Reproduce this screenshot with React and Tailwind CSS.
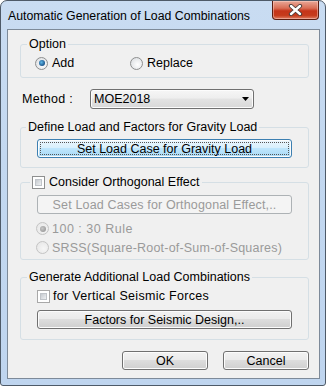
import React from "react";

const BTN =
  "h-[19px] flex items-center justify-center rounded-[3px] border leading-[14px]";
const BTN_NORMAL =
  "border-[#707070] text-black bg-[linear-gradient(#f2f2f2_0%,#ebebeb_45%,#dddddd_50%,#cfcfcf_100%)] shadow-[inset_0_0_0_1px_#fcfcfc]";
const BTN_FOCUS =
  "border-[#3c7fb1] text-black bg-[linear-gradient(#eaf6fd_0%,#d9f0fc_45%,#bee6fd_50%,#a7d9f5_100%)] shadow-[inset_0_0_0_1px_#fcfcfc]";
const BTN_DISABLED = "border-[#adb2b5] text-[#9a9a9a] bg-[#f4f4f4]";

function Radio({ checked, disabled }) {
  return (
    <span
      className={
        "w-[13px] h-[13px] rounded-full border flex items-center justify-center shrink-0 " +
        (disabled
          ? "border-[#c4c4c4] bg-[radial-gradient(circle_at_60%_60%,#f6f6f6_0%,#e4e4e4_100%)]"
          : "border-[#8e8f8f] bg-[radial-gradient(circle_at_60%_60%,#ffffff_0%,#d6d9dd_100%)]")
      }
    >
      {checked && (
        <span
          className={
            "w-[6px] h-[6px] rounded-full " +
            (disabled
              ? "bg-[radial-gradient(circle_at_40%_40%,#c8c8c8_0%,#8c8c8c_100%)]"
              : "bg-[radial-gradient(circle_at_40%_40%,#5fb6e6_0%,#174f86_75%)]")
          }
        />
      )}
    </span>
  );
}

function Check({ disabled }) {
  return (
    <span
      className={
        "w-[13px] h-[13px] border bg-white p-[2px] flex shrink-0 " +
        (disabled ? "border-[#a8a8a8]" : "border-[#8e8f8f]")
      }
    >
      <span className="flex-1 border border-[#c0c4c9] bg-[linear-gradient(135deg,#c6cacf_0%,#eef0f2_100%)]" />
    </span>
  );
}

function Group({ legend, legendClass = "ml-[6px]", children, className = "" }) {
  return (
    <fieldset
      className={
        "border border-[#d5dfe5] rounded-[3px] m-0 p-0 min-w-0 " + className
      }
    >
      <legend className={"px-[2px] leading-[14px] h-[14px] " + legendClass}>
        {legend}
      </legend>
      {children}
    </fieldset>
  );
}

export default function App() {
  return (
    <div className="w-[326px] h-[386px] bg-white font-['Liberation_Sans',Arial,sans-serif] text-black">
      <div className="w-[326px] h-[386px] flex flex-col border border-[#4e5a68] rounded-t-[7px] rounded-b-[3px] bg-[linear-gradient(180deg,#c9dcf2_0%,#c3d8f0_40%,#bfd5ef_100%)]">
        {/* Title bar */}
        <div className="h-[28px] flex items-start justify-between pl-[7px] pr-[6px]">
          <span className="self-center text-[12.3px] leading-[14px] mt-[1px] text-black">
            Automatic Generation of Load Combinations
          </span>
          <div className="w-[47px] h-[19px] rounded-b-[4px] border border-[#5b1e12] border-t-0 bg-[linear-gradient(180deg,#e9a898_0%,#d96d55_40%,#c5341a_55%,#c63b1c_80%,#df7d63_100%)] shadow-[inset_0_0_0_1px_rgba(255,220,210,0.45)] flex items-center justify-center">
            <svg width="15" height="12" viewBox="0 0 15 12">
              <path d="M3 2 L12 10 M12 2 L3 10" stroke="#4a3a38" strokeWidth="4.2" strokeLinecap="round" />
              <path d="M3 2 L12 10 M12 2 L3 10" stroke="#ffffff" strokeWidth="2.4" strokeLinecap="round" />
            </svg>
          </div>
        </div>

        {/* Client area */}
        <div className="ml-[6px] mr-[5px] h-[350px] border border-[#7d8a99] bg-[#f0f0f0] pt-[7px] pl-[12px] pr-[10px] pb-[8px] flex flex-col text-[12.5px] leading-[14px]">
          {/* Option */}
          <Group legend="Option">
            <div className="pt-[5px] pb-[7px] pl-[14px] flex items-center">
              <div className="flex items-center gap-[4px] w-[95px] h-[14px]">
                <Radio checked />
                <span>Add</span>
              </div>
              <div className="flex items-center gap-[4px] h-[14px]">
                <Radio />
                <span>Replace</span>
              </div>
            </div>
          </Group>

          {/* Method */}
          <div className="mt-[11px] h-[20px] flex items-center">
            <span className="ml-[2px] w-[68px] tracking-[0.3px]">Method :</span>
            <div className="w-[164px] h-[20px] rounded-[3px] border border-[#707070] bg-[linear-gradient(#f6f6f6_0%,#eeeeee_45%,#e3e3e3_50%,#d8d8d8_100%)] shadow-[inset_0_0_0_1px_#fcfcfc] flex items-center justify-between pl-[3px] pr-[4px]">
              <span>MOE2018</span>
              <svg width="7" height="4" viewBox="0 0 7 4">
                <path d="M0 0 H7 L3.5 4 Z" fill="#000" />
              </svg>
            </div>
          </div>

          {/* Gravity */}
          <Group legend="Define Load and Factors for Gravity Load" legendClass="ml-[5px]" className="mt-[11px]">
            <div className="pt-[5px] pb-[9px] px-[16px]">
              <div className={BTN + " " + BTN_FOCUS + " relative"}>
                <span className="absolute inset-[2px] border border-dotted border-[#555] rounded-[1px]" />
                <span>Set Load Case for Gravity Load</span>
              </div>
            </div>
          </Group>

          {/* Orthogonal */}
          <Group
            legend={
              <span className="flex items-center gap-[4px]">
                <Check />
                <span>Consider Orthogonal Effect</span>
              </span>
            }
            legendClass="ml-[9px]"
            className="mt-[7px]"
          >
            <div className="pt-[6px] pb-[2px] px-[16px]">
              <div className={BTN + " " + BTN_DISABLED + " tracking-[0.15px]"}>
                <span>Set Load Cases for Orthogonal Effect,..</span>
              </div>
              <div className="mt-[5px] h-[19px] flex items-center gap-[3px] -ml-[1px] text-[#9a9a9a]">
                <Radio checked disabled />
                <span className="tracking-[0.5px]">100 : 30 Rule</span>
              </div>
              <div className="h-[19px] flex items-center gap-[3px] -ml-[1px] text-[#9a9a9a]">
                <Radio disabled />
                <span className="tracking-[0.2px]">SRSS(Square-Root-of-Sum-of-Squares)</span>
              </div>
            </div>
          </Group>

          {/* Generate */}
          <Group legend="Generate Additional Load Combinations" className="mt-[10px]">
            <div className="pt-[5px] pb-[10px] px-[16px]">
              <div className="h-[14px] flex items-center gap-[3px]">
                <Check disabled />
                <span className="tracking-[0.3px]">for Vertical Seismic Forces</span>
              </div>
              <div className={BTN + " " + BTN_NORMAL + " mt-[7px]"}>
                <span>Factors for Seismic Design,..</span>
              </div>
            </div>
          </Group>

          {/* OK / Cancel */}
          <div className="mt-[11px] flex justify-end gap-[15px]">
            <div className={BTN + " " + BTN_NORMAL + " w-[86px]"}>OK</div>
            <div className={BTN + " " + BTN_NORMAL + " w-[86px]"}>Cancel</div>
          </div>
        </div>
      </div>
    </div>
  );
}
